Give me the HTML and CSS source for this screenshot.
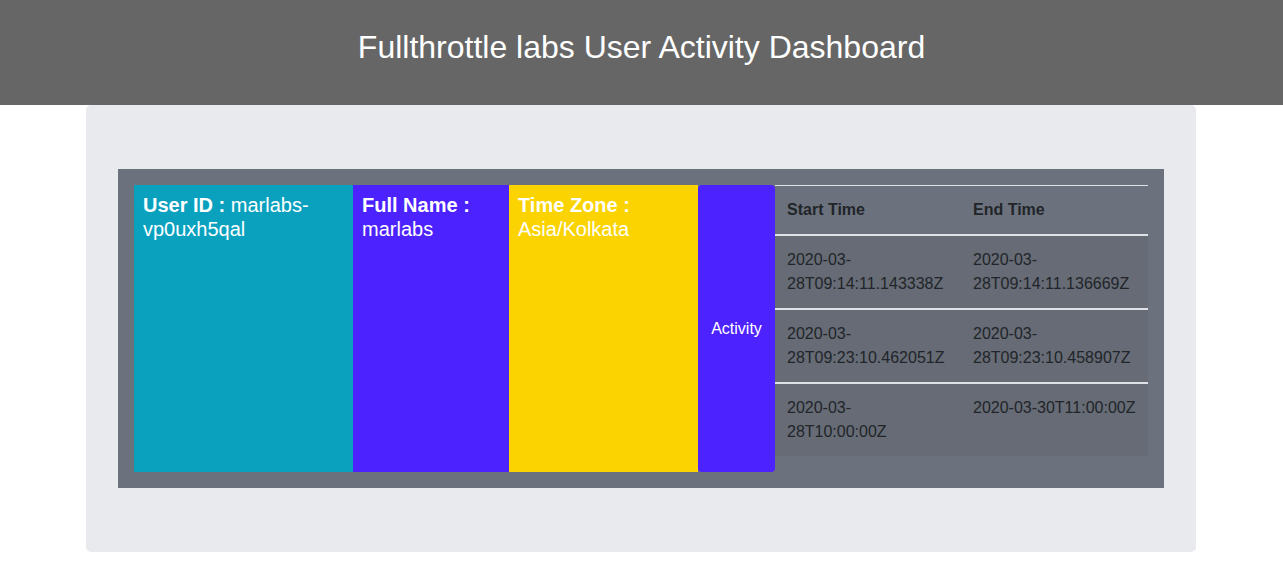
FILE: index.html
```html
<!DOCTYPE html>
<html>
<head>
<meta charset="utf-8">
<link rel="stylesheet" href="styles.css">
</head>
<body>
<header class="topbar">
  <h1 class="title">Fullthrottle labs User Activity Dashboard</h1>
</header>
<main class="jumbo">
  <section class="panel">
    <div class="card card-id"><b>User ID :</b> marlabs-vp0uxh5qal</div>
    <div class="card card-name"><b>Full Name :</b> marlabs</div>
    <div class="card card-tz"><b>Time Zone :</b> Asia/Kolkata</div>
    <div class="card card-act">Activity</div>
    <table class="acts">
      <thead>
        <tr><th class="c1">Start Time</th><th class="c2">End Time</th></tr>
      </thead>
      <tbody>
        <tr><td>2020-03-28T09:14:11.143338Z</td><td>2020-03-28T09:14:11.136669Z</td></tr>
        <tr><td>2020-03-28T09:23:10.462051Z</td><td>2020-03-28T09:23:10.458907Z</td></tr>
        <tr><td>2020-03-28T10:00:00Z</td><td>2020-03-30T11:00:00Z</td></tr>
      </tbody>
    </table>
  </section>
</main>
</body>
</html>
```
FILE: styles.css
```css
* { box-sizing: border-box; }
body {
  margin: 0;
  font-family: "Liberation Sans", Arial, sans-serif;
  background: #fff;
}
.topbar {
  background: #666666;
  height: 105px;
  display: flex;
  align-items: center;
  justify-content: center;
}
.title {
  margin: 0 0 10px;
  color: #fff;
  font-weight: 400;
  font-size: 32px;
  line-height: 1.2;
}
.jumbo {
  width: 1110px;
  margin: 0 0 0 calc((100% - 1111px) / 2);
  background: #e9eaee;
  border-radius: 5px;
  padding: 64px 32px;
}
.panel {
  background: #6c727d;
  padding: 16px;
  display: flex;
  align-items: flex-start;
}
.card {
  height: 287px;
  padding: 8px 9px;
  color: #fff;
  font-size: 20px;
  line-height: 24px;
  flex: none;
}
.card-id { width: 219px; background: #0aa1bf; }
.card-name { width: 156px; background: #4c22ff; }
.card-tz { width: 189px; background: #fad300; }
.card-act {
  width: 77px;
  background: #4c22ff;
  border-radius: 4px;
  display: flex;
  align-items: center;
  justify-content: center;
  font-size: 16px;
  padding: 0;
}
.acts {
  width: 373px;
  border-collapse: collapse;
  color: #212529;
  font-size: 16px;
  line-height: 24px;
  flex: none;
}
.acts th, .acts td {
  text-align: left;
  vertical-align: top;
  padding: 12px;
}
.acts th {
  border-top: 1px solid #dee2e6;
  border-bottom: 2px solid #dee2e6;
  font-weight: 700;
}
.acts .c1 { width: 186px; }
.acts tbody tr { background: #666b75; }
.acts td { border-top: 2px solid #dee2e6; }
.acts tbody tr:first-child td { border-top: 0; }
```
